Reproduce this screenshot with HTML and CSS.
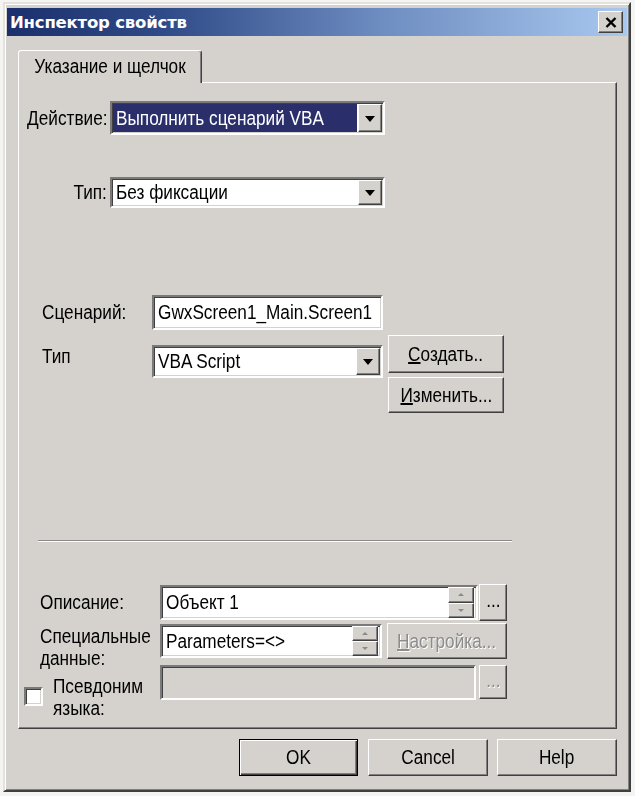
FILE: index.html
```html
<!DOCTYPE html>
<html lang="ru">
<head>
<meta charset="utf-8">
<title>Инспектор свойств</title>
<link rel="stylesheet" href="styles.css">
</head>
<body>
<div class="window">
  <div class="titlebar">
    <span class="title">Инспектор свойств</span>
    <span class="close raised">
      <svg width="12" height="11" viewBox="0 0 12 11"><path d="M1.5 1 L10.5 10 M10.5 1 L1.5 10" stroke="#000" stroke-width="2.4" fill="none"/></svg>
    </span>
  </div>
  <div class="body">
    <div class="tabs"><div class="tab"><span class="tx c">Указание и щелчок</span></div></div>
    <div class="panel">
      <div class="row row-action">
        <span class="lbl lbl-top"><span class="tx r">Действие:</span></span>
        <div class="sunken combo combo-action">
          <span class="val selected"><span class="tx">Выполнить сценарий VBA</span></span>
          <span class="drop raised"><i class="tri"></i></span>
        </div>
      </div>
      <div class="row row-type">
        <span class="lbl lbl-top"><span class="tx r">Тип:</span></span>
        <div class="sunken combo combo-type">
          <span class="val"><span class="tx">Без фиксации</span></span>
          <span class="drop raised"><i class="tri"></i></span>
        </div>
      </div>

      <div class="script">
        <div class="srow srow-name">
          <span class="slbl"><span class="tx">Сценарий:</span></span>
          <div class="sunken field field-script"><span class="val"><span class="tx">GwxScreen1_Main.Screen1</span></span></div>
        </div>
        <div class="srow srow-kind">
          <span class="slbl slbl-kind"><span class="tx">Тип</span></span>
          <div class="sunken combo combo-kind">
            <span class="val"><span class="tx">VBA Script</span></span>
            <span class="drop raised"><i class="tri"></i></span>
          </div>
          <div class="btncol">
            <span class="btn raised btn-create"><span class="tx c"><u>С</u>оздать..</span></span>
            <span class="btn raised btn-edit"><span class="tx c"><u>И</u>зменить...</span></span>
          </div>
        </div>
      </div>

      <div class="sep"></div>

      <div class="props">
        <div class="prow prow-desc">
          <span class="plbl"><span class="tx">Описание:</span></span>
          <div class="sunken field field-desc">
            <span class="val"><span class="tx">Объект 1</span></span>
            <span class="spin"><span class="raised sp"><i class="stri up"></i></span><span class="raised sp"><i class="stri down"></i></span></span>
          </div>
          <span class="btn raised dots"><span class="tx c">...</span></span>
        </div>
        <div class="prow prow-spec">
          <span class="plbl plbl-two"><span class="tx">Специальные<br>данные:</span></span>
          <div class="sunken field field-spec">
            <span class="val"><span class="tx">Parameters=&lt;&gt;</span></span>
            <span class="spin"><span class="raised sp"><i class="stri up"></i></span><span class="raised sp"><i class="stri down"></i></span></span>
          </div>
          <span class="btn raised btn-setup disabled"><span class="tx c"><u>Н</u>астройка...</span></span>
        </div>
        <div class="prow prow-alias">
          <div class="aliaslbl">
            <span class="sunken check"></span>
            <span class="plbl-alias"><span class="tx">Псевдоним<br>языка:</span></span>
          </div>
          <div class="sunken field field-alias"></div>
          <span class="btn raised dots dots-dis disabled"><span class="tx c">...</span></span>
        </div>
      </div>
    </div>
    <div class="buttons">
      <span class="btn dbtn ok"><span class="tx c">OK</span></span>
      <span class="btn raised dbtn"><span class="tx c">Cancel</span></span>
      <span class="btn raised dbtn"><span class="tx c">Help</span></span>
    </div>
  </div>
</div>
</body>
</html>
```
FILE: styles.css
```css
* { box-sizing: border-box; }
html, body { margin: 0; padding: 0; background: #f4f4f2; }
body {
  font-family: "Liberation Sans", Arial, sans-serif;
  font-size: 20px;
  color: #000;
}

/* condensed text, to match the narrow UI font of the reference */
.tx {
  display: inline-block;
  white-space: nowrap;
  transform: scaleX(0.86);
  transform-origin: 0 50%;
}
.tx.c { transform-origin: 50% 50%; }
.tx.r { transform-origin: 100% 50%; }

.window {
  width: 628px;
  margin: 2px 0 0 3px;
  border: 2px solid;
  border-color: #e4e2de #404040 #404040 #e4e2de;
  box-shadow: inset 1px 1px 0 #fff, inset -1px -1px 0 #808080;
  background: #d5d2cd;
  padding: 4px 2px;
}

.titlebar {
  height: 28px;
  display: flex;
  align-items: center;
  justify-content: space-between;
  padding: 0 4px 0 3px;
  background: linear-gradient(to right, #1b306c 0%, #2f4a88 25%, #6d8cc0 60%, #a9c8ef 100%);
}
.title {
  font-family: "DejaVu Sans", sans-serif;
  font-weight: bold;
  font-size: 16.5px;
  color: #fff;
  letter-spacing: -0.2px;
}
.close {
  width: 25px;
  height: 22px;
  display: flex;
  align-items: center;
  justify-content: center;
}

.raised {
  background: #d5d2cd;
  border: 1px solid;
  border-color: #fff #404040 #404040 #fff;
  box-shadow: inset -1px -1px 0 #808080;
}
.sunken {
  background: #fff;
  border: 2px solid;
  border-color: #7a7a7a #fff #fff #7a7a7a;
  box-shadow: inset 1px 1px 0 #404040, inset -1px -1px 0 #d5d2cd;
}

.body { padding: 14px 10px 10px 11px; }

.tabs { display: flex; height: 32px; }
.tab {
  position: relative;
  z-index: 1;
  width: 184px;
  height: 33px;
  border: 1px solid;
  border-bottom: none;
  border-color: #fff #404040 transparent #fff;
  box-shadow: inset -1px 0 0 #808080;
  border-radius: 3px 3px 0 0;
  background: #d5d2cd;
  display: flex;
  justify-content: center;
  align-items: center;
  padding-bottom: 2px;
}

.panel {
  height: 647px;
  border: 1px solid;
  border-color: #fff #404040 #404040 #fff;
  box-shadow: inset -1px -1px 0 #808080;
}

.row { display: flex; align-items: center; }
.row-action { margin-top: 18px; }
.row-type { margin-top: 42px; }
.lbl-top { width: 91px; display: flex; justify-content: flex-end; padding-right: 3px; }

.combo { display: flex; align-items: stretch; padding: 1px; }
.combo .val { flex: 1; min-width: 0; display: flex; align-items: center; padding-left: 3px; }
.combo .val.selected { background: #2a2f6b; color: #fff; }
.drop {
  width: 24px;
  flex: none;
  display: flex;
  align-items: center;
  justify-content: center;
  margin-left: 1px;
}
.tri {
  display: block;
  width: 0; height: 0;
  border-left: 5px solid transparent;
  border-right: 5px solid transparent;
  border-top: 6px solid #000;
  margin-top: 1px;
}
.combo-action { width: 275px; height: 34px; }
.combo-type { width: 275px; height: 31px; }

.script { margin-top: 87px; padding-left: 23px; }
.srow { display: flex; }
.srow-name { align-items: center; }
.slbl { width: 110px; flex: none; }
.slbl-kind { margin-top: 10px; }
.field { display: flex; align-items: stretch; }
.field .val { flex: 1; min-width: 0; display: flex; align-items: center; padding-left: 4px; }
.field-script { width: 231px; height: 35px; }
.srow-kind { margin-top: 5px; align-items: flex-start; }
.combo-kind { width: 231px; height: 33px; margin-top: 10px; }
.btncol { display: flex; flex-direction: column; gap: 4px; margin-left: 5px; width: 116px; }

.btn {
  display: flex;
  align-items: center;
  justify-content: center;
  flex: none;
}
.btn-create { height: 38px; }
.btn-edit { height: 36px; }

.sep {
  margin: 127px 0 0 19px;
  width: 474px;
  height: 2px;
  border-top: 1px solid #8a8a8a;
  border-bottom: 1px solid #fff;
}

.props { margin-top: 42px; }
.prow { display: flex; align-items: center; }
.plbl { width: 141px; padding-left: 21px; flex: none; }
.plbl-two { align-self: flex-start; line-height: 22px; margin-top: 2px; height: 36px; }
.prow-desc { height: 37px; }
.field-desc { width: 318px; height: 35px; }
.dots { width: 28px; height: 37px; margin-left: 1px; padding-bottom: 4px; }
.spin { display: flex; flex-direction: column; width: 26px; flex: none; margin: 0 2px 0 0; }
.sp { flex: 1; display: flex; align-items: center; justify-content: center; }
.stri { display: block; width: 0; height: 0; border-left: 3px solid transparent; border-right: 3px solid transparent; }
.stri.up { border-bottom: 3px solid #8a8a8a; }
.stri.down { border-top: 3px solid #8a8a8a; }

.prow-spec { height: 36px; margin-top: 2px; }
.field-spec { width: 222px; height: 34px; }
.btn-setup { width: 120px; height: 36px; margin-left: 5px; }
.disabled { color: #8c8c8c; text-shadow: 1px 1px 0 #fff; }

.prow-alias { height: 35px; margin-top: 6px; align-items: flex-start; }
.aliaslbl { width: 141px; flex: none; display: flex; align-items: flex-start; padding-left: 5px; }
.check { width: 19px; height: 19px; margin-top: 22px; flex: none; }
.plbl-alias { margin-left: 10px; line-height: 22px; margin-top: 10px; }
.field-alias { width: 316px; height: 35px; background: #d5d2cd; }
.dots-dis { height: 34px; margin-left: 3px; }

.buttons { display: flex; justify-content: flex-end; gap: 9px; margin-top: 10px; }
.dbtn { width: 120px; height: 37px; }
.ok {
  width: 119px;
  margin-right: 1px;
  background: #d5d2cd;
  border: 1px solid #000;
  box-shadow: inset 1px 1px 0 #fff, inset -1px -1px 0 #404040, inset -2px -2px 0 #808080;
}
```
